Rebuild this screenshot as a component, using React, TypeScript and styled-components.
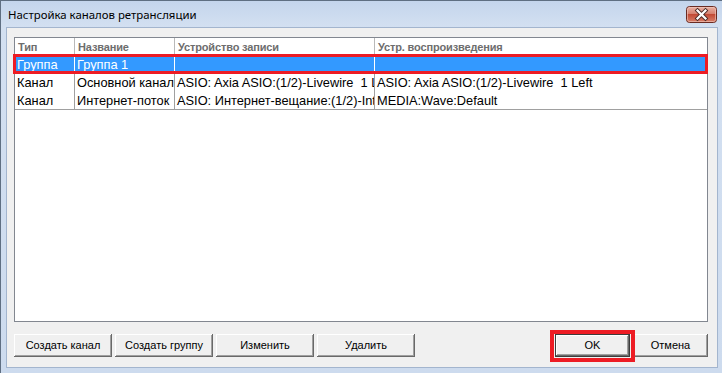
import React from "react";
import styled, { createGlobalStyle } from "styled-components";

const GlobalStyle = createGlobalStyle`
  html, body { margin: 0; padding: 0; background: #ffffff; }
  #root { width: 722px; height: 373px; }
`;

const Window = styled.div`
  width: 722px;
  height: 373px;
  box-sizing: border-box;
  display: flex;
  flex-direction: column;
  background: linear-gradient(180deg, #c4d5ec 0px, #d3e0f1 26px, #cddbee 100%);
  border-left: 1px solid #5f6f82;
  border-top: 1px solid #5f6f82;
  overflow: hidden;
`;

const TitleBar = styled.div`
  height: 26px;
  display: flex;
  align-items: center;
  justify-content: space-between;
  padding-left: 7px;
  padding-right: 5px;
`;

const Title = styled.div`
  font-family: "Noto Sans", "Open Sans", sans-serif;
  font-size: 11.4px;
  color: #000;
  margin-top: 1px;
`;

const FrameBody = styled.div`
  flex: 1;
  display: flex;
  padding: 0 4px 5px 5px;
  min-height: 0;
`;

const Client = styled.div`
  flex: 1;
  display: flex;
  flex-direction: column;
  background: #f0f0f0;
  border: 1px solid #a3b5ce;
  padding: 9px 9px 10px 7px;
  min-width: 0;
`;

const ListView = styled.div`
  position: relative;
  height: 285px;
  box-sizing: border-box;
  background: #ffffff;
  border: 1px solid #828790;
  font-family: "Liberation Sans", Arial, sans-serif;
`;

const GridRow = styled.div<{ $selected?: boolean; $height: number }>`
  display: grid;
  grid-template-columns: 60px 100px 200px 1fr;
  height: ${(p) => p.$height}px;
  background: ${(p) => (p.$selected ? "#3399ff" : "transparent")};
  color: ${(p) => (p.$selected ? "#ffffff" : "#000000")};
`;

const HeaderCell = styled.div<{ $last?: boolean }>`
  font-size: 11px;
  font-weight: bold;
  letter-spacing: -0.15px;
  color: #6d6d6d;
  display: flex;
  align-items: center;
  padding-left: 3px;
  padding-top: 1px;
  border-right: ${(p) => (p.$last ? "none" : "1px solid #b9b9b9")};
  overflow: hidden;
  white-space: nowrap;
`;

const Cell = styled.div<{ $last?: boolean; $selected?: boolean }>`
  font-size: 12.8px;
  display: flex;
  align-items: center;
  padding-left: 2px;
  padding-top: 1px;
  border-right: ${(p) =>
    p.$last ? "none" : p.$selected ? "1px solid #ffffff" : "1px solid #a0a0a0"};
  overflow: hidden;
  white-space: pre;
`;

const RowsEnd = styled.div`
  height: 0;
  border-bottom: 1px solid #a0a0a0;
`;

const RedFrame = styled.div<{ $w: number }>`
  position: absolute;
  box-sizing: border-box;
  border: ${(p) => p.$w}px solid #ed1c24;
  pointer-events: none;
`;

const RowMark = styled(RedFrame)`
  left: -2px;
  top: 16px;
  width: 695px;
  height: 20px;
`;

const ButtonBar = styled.div`
  margin-top: 12px;
  display: flex;
  justify-content: space-between;
`;

const ButtonGroup = styled.div<{ $gap: number }>`
  display: flex;
  gap: ${(p) => p.$gap}px;
`;

const Button = styled.button<{ $w: number; $default?: boolean }>`
  width: ${(p) => p.$w}px;
  height: 23px;
  box-sizing: border-box;
  margin: 0;
  padding: 0 0 1px 0;
  font-family: "Liberation Sans", Arial, sans-serif;
  font-size: 11px;
  color: #000;
  background: #f0f0f0;
  border: ${(p) => (p.$default ? "1px solid #3c3c3c" : "none")};
  box-shadow: inset -1px -1px 0 #696969, inset 1px 1px 0 #ffffff,
    inset -2px -2px 0 #a0a0a0, inset 2px 2px 0 #f0f0f0;
  cursor: default;
`;

const OkWrap = styled.div`
  position: relative;
  display: flex;
`;

const OkMark = styled(RedFrame)`
  left: -5px;
  top: -4px;
  right: -5px;
  bottom: -5px;
`;

const CloseBtn = () => (
  <svg width="31" height="17" viewBox="0 0 31 17">
    <defs>
      <linearGradient id="cg" x1="0" y1="0" x2="0" y2="1">
        <stop offset="0" stopColor="#eab3a6" />
        <stop offset="0.45" stopColor="#d6816f" />
        <stop offset="0.5" stopColor="#c24a35" />
        <stop offset="1" stopColor="#d9826c" />
      </linearGradient>
    </defs>
    <rect x="0.5" y="0.5" width="30" height="16" rx="3" fill="url(#cg)" stroke="#6a2b22" />
    <rect x="1.5" y="1.5" width="28" height="14" rx="2" fill="none" stroke="#f1c9bf" strokeOpacity="0.6" />
    <path d="M11.5 4.5 L19.5 12.5 M19.5 4.5 L11.5 12.5" stroke="#4a2a26" strokeWidth="4" strokeLinecap="square" />
    <path d="M11.5 4.5 L19.5 12.5 M19.5 4.5 L11.5 12.5" stroke="#ffffff" strokeWidth="2.2" strokeLinecap="square" />
  </svg>
);

type Row = { type: string; name: string; rec: string; play: string; selected?: boolean };

const rows: Row[] = [
  { type: "Группа", name: "Группа 1", rec: "", play: "", selected: true },
  {
    type: "Канал",
    name: "Основной канал",
    rec: "ASIO: Axia ASIO:(1/2)-Livewire  1 Left",
    play: "ASIO: Axia ASIO:(1/2)-Livewire  1 Left",
  },
  {
    type: "Канал",
    name: "Интернет-поток",
    rec: "ASIO: Интернет-вещание:(1/2)-Internet",
    play: "MEDIA:Wave:Default",
  },
];

const headers = ["Тип", "Название", "Устройство записи", "Устр. воспроизведения"];

export default function App() {
  return (
    <>
      <GlobalStyle />
      <Window>
        <TitleBar>
          <Title>Настройка каналов ретрансляции</Title>
          <CloseBtn />
        </TitleBar>
        <FrameBody>
          <Client>
            <ListView>
              <GridRow $height={17}>
                {headers.map((h, i) => (
                  <HeaderCell key={h} $last={i === headers.length - 1}>
                    {h}
                  </HeaderCell>
                ))}
              </GridRow>
              {rows.map((r, i) => (
                <GridRow key={i} $height={18} $selected={r.selected}>
                  <Cell $selected={r.selected}>{r.type}</Cell>
                  <Cell $selected={r.selected}>{r.name}</Cell>
                  <Cell $selected={r.selected}>{r.rec}</Cell>
                  <Cell $selected={r.selected} $last>
                    {r.play}
                  </Cell>
                </GridRow>
              ))}
              <RowsEnd />
              <RowMark $w={3} />
            </ListView>
            <ButtonBar>
              <ButtonGroup $gap={3}>
                <Button $w={98}>Создать канал</Button>
                <Button $w={98}>Создать группу</Button>
                <Button $w={98}>Изменить</Button>
                <Button $w={98}>Удалить</Button>
              </ButtonGroup>
              <ButtonGroup $gap={3}>
                <OkWrap>
                  <Button $w={75} $default>
                    OK
                  </Button>
                  <OkMark $w={4} />
                </OkWrap>
                <Button $w={75}>Отмена</Button>
              </ButtonGroup>
            </ButtonBar>
          </Client>
        </FrameBody>
      </Window>
    </>
  );
}
